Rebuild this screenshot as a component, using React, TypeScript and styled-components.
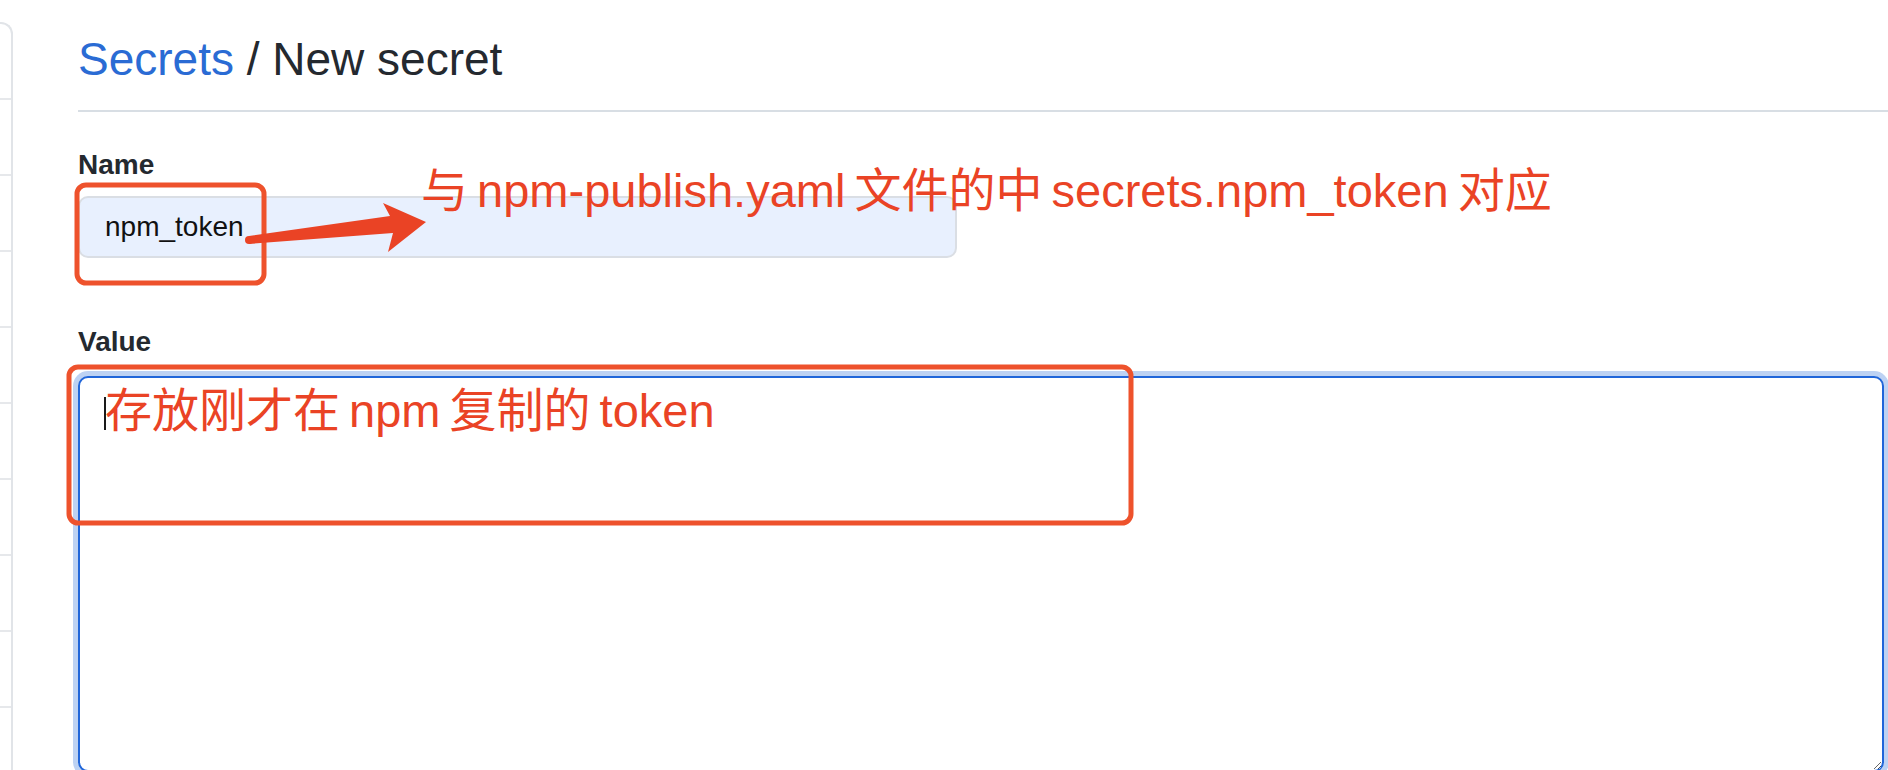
import React from "react";
import styled, { createGlobalStyle } from "styled-components";

const GlobalStyle = createGlobalStyle`
  html, body {
    margin: 0;
    padding: 0;
    overflow: hidden;
    background: #ffffff;
  }
  body {
    font-family: "Liberation Sans", Arial, "Noto Sans CJK SC", sans-serif;
    color: #24292f;
  }
`;

const Page = styled.div`
  position: relative;
  display: flex;
  align-items: flex-start;
  width: 1888px;
  height: 770px;
  overflow: hidden;
  background: #ffffff;
`;

const SideNav = styled.nav`
  flex: none;
  box-sizing: border-box;
  width: 13px;
  margin-top: 22px;
  border: 2px solid #e1e4e8;
  border-left: none;
  border-bottom: none;
  border-top-right-radius: 12px;
  display: flex;
  flex-direction: column;
`;

const NavItem = styled.div`
  height: 74px;
  border-bottom: 2px solid #e6e8eb;
`;

const Main = styled.main`
  flex: 1;
  min-width: 0;
  padding-left: 65px;
  display: flex;
  flex-direction: column;
`;

const Subhead = styled.div`
  padding-top: 29px;
  padding-bottom: 21px;
  border-bottom: 2px solid #d8dee4;
`;

const Heading = styled.h2`
  margin: 0;
  font-size: 46px;
  line-height: 60px;
  font-weight: 400;
  color: #24292f;
`;

const Crumb = styled.a`
  color: #2a6bd4;
  text-decoration: none;
`;

const FormGroup = styled.div<{ $gap: number }>`
  display: flex;
  flex-direction: column;
  margin-top: ${(p) => p.$gap}px;
`;

const Label = styled.label`
  display: block;
  font-size: 28px;
  line-height: 36px;
  font-weight: 700;
  color: #24292f;
`;

const NameInput = styled.input`
  box-sizing: border-box;
  width: 879px;
  height: 62px;
  margin-top: 13px;
  padding: 0 25px;
  border: 2px solid #dadee4;
  border-radius: 10px;
  background: #e8f0fe;
  font-family: "Liberation Sans", Arial, sans-serif;
  font-size: 28px;
  color: #111111;
  outline: none;
`;

const AreaWrap = styled.div`
  position: relative;
  margin-top: 16px;
  width: 1806px;
`;

const ValueArea = styled.textarea`
  display: block;
  box-sizing: border-box;
  width: 1806px;
  height: 396px;
  padding: 16px 25px;
  border: 2px solid #2166d9;
  border-radius: 10px;
  box-shadow: 0 0 0 5px #bdd2f3;
  background: #ffffff;
  font-family: "Liberation Sans", Arial, sans-serif;
  font-size: 28px;
  outline: none;
  resize: vertical;
`;

const Caret = styled.span`
  position: absolute;
  left: 26px;
  top: 21px;
  width: 2px;
  height: 33px;
  background: #1a1a1a;
`;

const AnnotationLayer = styled.svg`
  position: absolute;
  left: 0;
  top: 0;
  pointer-events: none;
`;

const Note = styled.span<{ $x: number; $y: number }>`
  position: absolute;
  left: ${(p) => p.$x}px;
  top: ${(p) => p.$y}px;
  font-family: "Liberation Sans", Arial, "Noto Sans CJK SC", sans-serif;
  font-size: 47px;
  line-height: 47px;
  color: #ea4325;
  white-space: nowrap;
  word-spacing: -4px;
  pointer-events: none;
`;

const navRows = Array.from({ length: 10 }, (_, i) => i);

export default function App() {
  return (
    <>
      <GlobalStyle />
      <Page>
        <SideNav>
          {navRows.map((i) => (
            <NavItem key={i} />
          ))}
        </SideNav>
        <Main>
          <Subhead>
            <Heading>
              <Crumb href="#">Secrets</Crumb> / New secret
            </Heading>
          </Subhead>
          <FormGroup $gap={35}>
            <Label htmlFor="secret-name">Name</Label>
            <NameInput id="secret-name" defaultValue="npm_token" readOnly />
          </FormGroup>
          <FormGroup $gap={66}>
            <Label htmlFor="secret-value">Value</Label>
            <AreaWrap>
              <ValueArea id="secret-value" />
              <Caret />
            </AreaWrap>
          </FormGroup>
        </Main>

        <AnnotationLayer width="1888" height="770" viewBox="0 0 1888 770">
          <rect x="77" y="185" width="187" height="98" rx="9" fill="none" stroke="#ee522c" strokeWidth="5" />
          <rect x="69" y="367" width="1062" height="156" rx="9" fill="none" stroke="#ee522c" strokeWidth="5" />
          <circle cx="249" cy="240" r="4" fill="#ea4325" />
          <polygon
            points="249,236 390,216 383,203 426,222 388,252 393,233 249,244"
            fill="#ea4325"
          />
        </AnnotationLayer>
        <Note $x={421} $y={167}>与 npm-publish.yaml 文件的中 secrets.npm_token 对应</Note>
        <Note $x={105} $y={387}>存放刚才在 npm 复制的 token</Note>
      </Page>
    </>
  );
}
